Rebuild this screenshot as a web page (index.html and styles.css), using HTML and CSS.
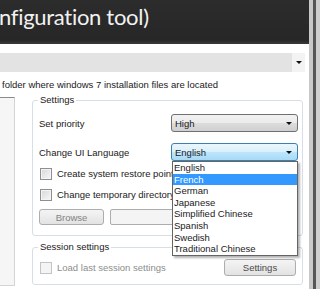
FILE: index.html
```html
<!DOCTYPE html>
<html lang="en">
<head>
  <meta charset="UTF-8">
  <title>Configuration tool</title>
  <link rel="stylesheet" href="styles.css">
</head>
<body>
  <div class="screen">
    <div class="window">
      <header class="titlebar">
        <h1>nfiguration tool)</h1>
      </header>

      <div class="drive-row">
        <div class="drive-field"></div>
        <div class="drive-arrow"><span class="arrow"></span></div>
      </div>

      <p class="hint">folder where windows 7 installation files are located</p>

      <div class="content">
        <div class="side-list"></div>

        <div class="groups">
          <div class="group settings">
            <span class="group-title">Settings</span>

            <div class="row">
              <span class="label">Set priority</span>
              <div class="select">High<span class="arrow"></span></div>
            </div>

            <div class="row lang-row">
              <span class="label">Change UI Language</span>
              <div class="select active">English<span class="arrow"></span></div>
              <ul class="dropdown">
                <li>English</li>
                <li class="selected">French</li>
                <li>German</li>
                <li>Japanese</li>
                <li>Simplified Chinese</li>
                <li>Spanish</li>
                <li>Swedish</li>
                <li>Traditional Chinese</li>
              </ul>
            </div>

            <div class="check check-first"><span class="box"></span>Create system restore point</div>
            <div class="check"><span class="box"></span>Change temporary directory</div>

            <div class="dir-row">
              <button class="btn disabled">Browse</button>
              <div class="dir-field"></div>
            </div>
          </div>

          <div class="group session">
            <span class="group-title">Session settings</span>
            <div class="session-row">
              <div class="check disabled"><span class="box"></span>Load last session settings</div>
              <button class="btn">Settings</button>
            </div>
          </div>
        </div>
      </div>
    </div>
    <div class="frame"></div>
  </div>
</body>
</html>
```

FILE: styles.css
```css
body {
  margin: 0;
  font-family: 'Liberation Sans', Arial, sans-serif;
  font-size: 9.5px;
  color: #1a1a1a;
  background-color: #ffffff;
}
.screen {
  display: flex;
  width: 320px;
  height: 289px;
  overflow: hidden;
}
.window {
  width: 309px;
  flex-shrink: 0;
  background-color: #ffffff;
}
.frame {
  flex: 1;
  background: linear-gradient(to right, #c9c9c9 0, #c9c9c9 4px, #565656 4px, #565656 7px, #cfcfcf 7px);
}

/* title */
.titlebar {
  height: 44px;
  background: linear-gradient(to bottom, #2c2c2c 0, #272727 40px, #3a3a3a 44px);
  overflow: hidden;
}
.titlebar h1 {
  margin: 0 0 0 -1px;
  font-family: 'Lato', 'Open Sans', sans-serif;
  font-weight: 400;
  font-size: 22px;
  letter-spacing: -0.3px;
  line-height: 33px;
  color: #f2f2f2;
  white-space: nowrap;
}

/* drive combo */
.drive-row {
  display: flex;
  height: 19px;
  margin-top: 9px;
  width: 305px;
}
.drive-field {
  flex: 1;
  background-color: #e3e3e3;
}
.drive-arrow {
  width: 13px;
  background-color: #f3f3f3;
  display: flex;
  align-items: center;
  justify-content: center;
}
.arrow {
  width: 0;
  height: 0;
  border-left: 3px solid transparent;
  border-right: 3px solid transparent;
  border-top: 3px solid #111111;
}
.hint {
  margin: 0;
  padding-left: 2px;
  height: 25px;
  line-height: 26px;
  white-space: nowrap;
}

/* content */
.content {
  display: flex;
}
.side-list {
  width: 15px;
  height: 189px;
  border-top: 1px solid #8a8a8a;
  border-right: 1px solid #d4d4d4;
  border-bottom: 1px solid #d4d4d4;
  background-color: #f6f6f6;
  box-sizing: border-box;
}
.groups {
  margin-left: 17px;
  padding-top: 3px;
  width: 271px;
}
.group {
  position: relative;
  border: 1px solid #d5dfe5;
  border-radius: 3px;
  box-shadow: inset 1px 1px 0 #ffffff;
}
.group-title {
  position: absolute;
  top: -7px;
  left: 5px;
  padding: 0 2px;
  line-height: 12px;
  background-color: #ffffff;
}
.settings {
  padding: 13px 4px 10px 6px;
}
.session {
  margin-top: 11px;
  padding: 11px 6px 8px 6px;
}

.row {
  display: flex;
  align-items: center;
  justify-content: space-between;
  height: 18px;
}
.lang-row {
  position: relative;
  margin-top: 11px;
}
.label {
  padding-top: 1px;
}
.select {
  box-sizing: border-box;
  width: 127px;
  height: 18px;
  padding: 0 5px 0 3px;
  display: flex;
  align-items: center;
  justify-content: space-between;
  border: 1px solid #707070;
  border-radius: 3px;
  background: linear-gradient(to bottom, #f2f2f2 0, #ebebeb 50%, #dddddd 50%, #cfcfcf 100%);
}
.select.active {
  border-color: #3c7fb1;
  background: linear-gradient(to bottom, #eaf6fd 0, #d9f0fc 50%, #bee6fd 50%, #a7d9f5 100%);
}
.dropdown {
  position: absolute;
  top: 18px;
  right: 0;
  z-index: 2;
  width: 126px;
  margin: 0;
  padding: 0;
  list-style: none;
  box-sizing: border-box;
  border: 1px solid #646464;
  background-color: #ffffff;
  box-shadow: 2px 2px 2px rgba(0, 0, 0, 0.3);
}
.dropdown li {
  height: 11.6px;
  line-height: 12px;
  padding-left: 1px;
  white-space: nowrap;
}
.dropdown li.selected {
  background-color: #3399ff;
  color: #ffffff;
}

.check {
  display: flex;
  align-items: center;
  height: 13px;
  margin-top: 8px;
  white-space: nowrap;
}
.check-first {
  margin-top: 6px;
}
.box {
  box-sizing: border-box;
  width: 12px;
  height: 12px;
  margin: 0 5px 0 1px;
  border: 1px solid #8e8f8f;
  background: linear-gradient(135deg, #d8d8d8, #f7f7f7);
  box-shadow: inset 0 0 0 1px #f4f4f4;
}
.check.disabled {
  margin-top: 0;
  color: #8d8d8d;
}
.check.disabled .box {
  border-color: #c4c4c4;
  background: #f4f4f4;
}

.dir-row {
  display: flex;
  gap: 6px;
  margin-top: 8px;
  height: 16px;
}
.btn {
  box-sizing: border-box;
  height: 16px;
  padding: 0;
  font-family: inherit;
  font-size: 9.5px;
  color: #4a4a4a;
  border: 1px solid #adadad;
  border-radius: 3px;
  background: linear-gradient(to bottom, #f4f4f4 0, #ececec 50%, #e2e2e2 100%);
}
.btn.disabled {
  color: #838383;
}
.dir-row .btn {
  width: 65px;
}
.dir-field {
  flex: 1;
  box-sizing: border-box;
  border: 1px solid #adadad;
  border-radius: 2px;
  background-color: #f4f4f4;
}
.session-row {
  display: flex;
  align-items: center;
  justify-content: space-between;
}
.session-row .btn {
  width: 72px;
  height: 17px;
}
```
